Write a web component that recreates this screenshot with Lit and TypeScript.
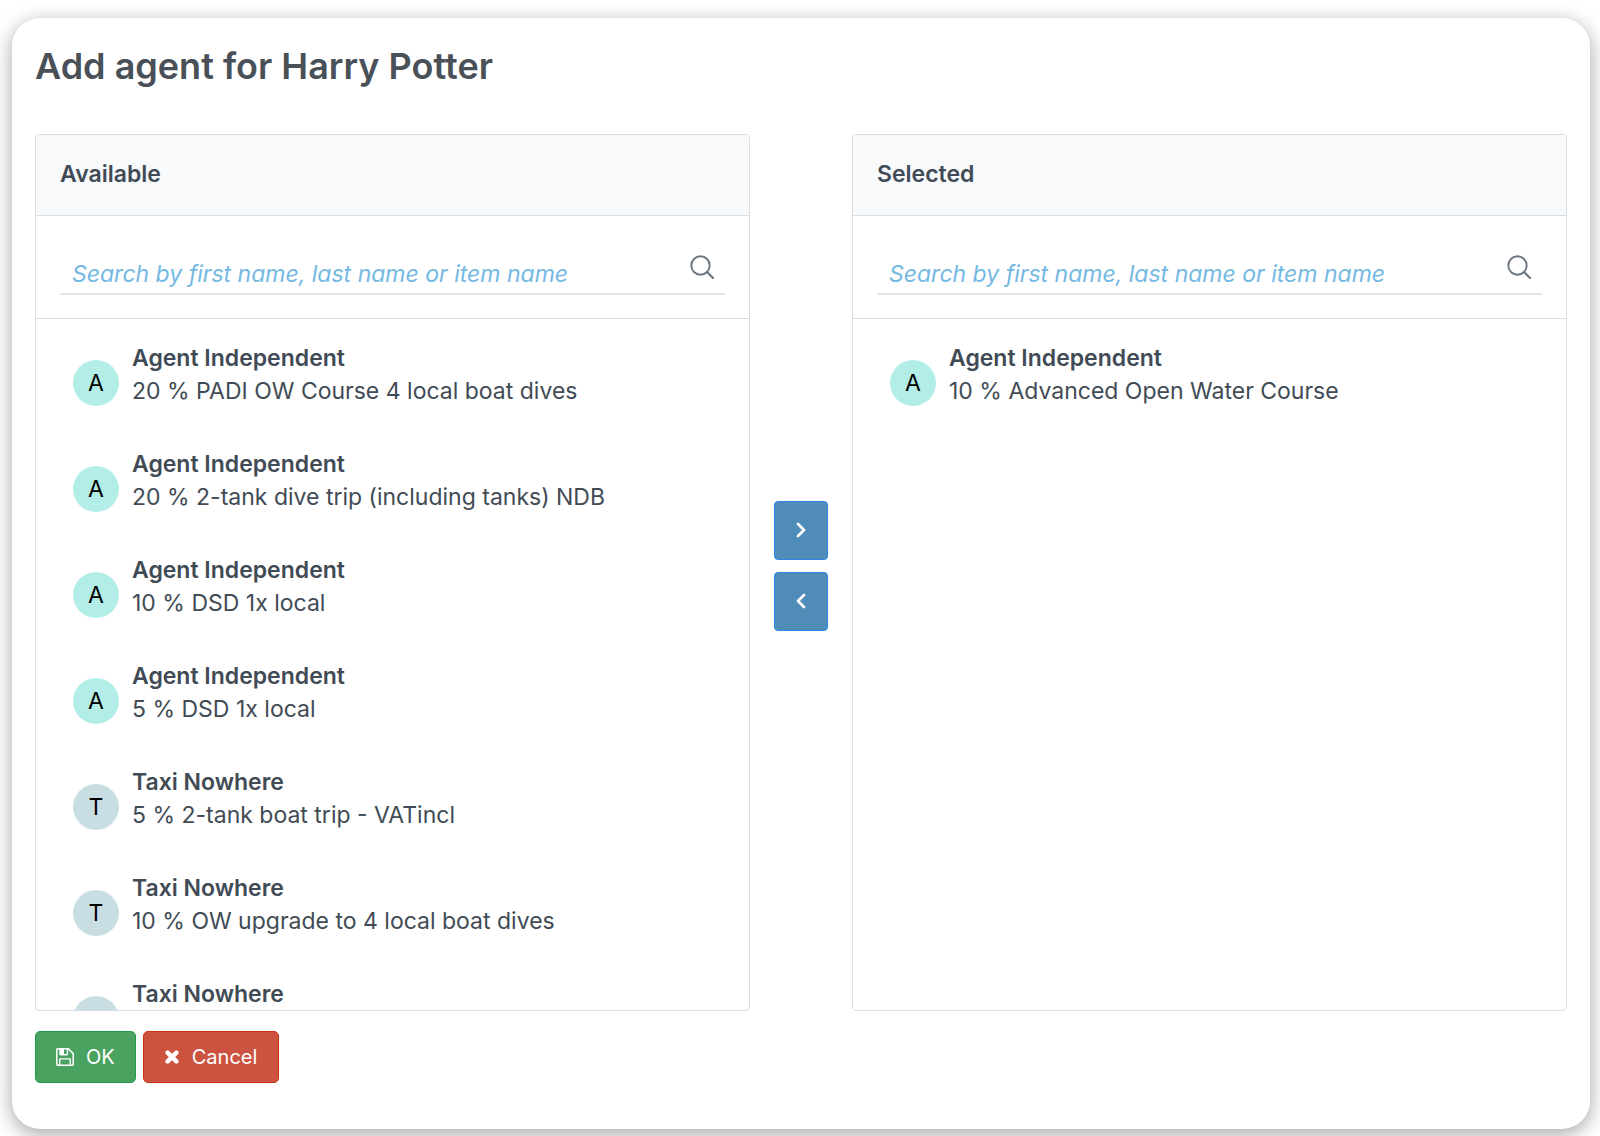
import { LitElement, html, css, svg } from "lit";
import { customElement, property, state } from "lit/decorators.js";

interface Commission {
  id: number;
  agent: string;
  detail: string;
}

const searchIcon = html`<svg class="icon" viewBox="0 0 24 24" width="24" height="24" aria-hidden="true">
  ${svg`<circle cx="10.5" cy="10.5" r="9.2" fill="none" stroke="currentColor" stroke-width="1.9"/>
  <path d="M17 17l6 6" fill="none" stroke="currentColor" stroke-width="2.1" stroke-linecap="round"/>`}
</svg>`;

const chevron = (d: string) => html`<svg viewBox="0 0 16 16" width="16" height="16" aria-hidden="true">
  <path d=${d} fill="none" stroke="currentColor" stroke-width="2.7" stroke-linecap="round" stroke-linejoin="round"/>
</svg>`;

const saveIcon = html`<svg viewBox="0 0 18 18" width="18" height="18" aria-hidden="true">
  <path d="M1.7 .8H12.4L17.2 5.6V16.3a.9 .9 0 0 1-.9 .9H1.7a.9 .9 0 0 1-.9-.9V1.7a.9 .9 0 0 1 .9-.9z" fill="none" stroke="currentColor" stroke-width="1.5"/>
  <path d="M4 1V6.1a.7 .7 0 0 0 .7 .7H10.8a.7 .7 0 0 0 .7-.7V1M3.7 17V11.6a.7 .7 0 0 1 .7-.7H13.6a.7 .7 0 0 1 .7 .7V17" fill="none" stroke="currentColor" stroke-width="1.4"/>
  <path d="M4 1h4v5H4z" fill="currentColor"/>
</svg>`;

const closeIcon = html`<svg viewBox="0 0 14 14" width="14" height="14" aria-hidden="true">
  <path d="M2.6 2.6l8.8 8.8M11.4 2.6l-8.8 8.8" fill="none" stroke="currentColor" stroke-width="4.4" stroke-linecap="round"/>
</svg>`;

@customElement("agent-panel")
export class AgentPanel extends LitElement {
  @property() heading = "";
  @property({ attribute: false }) items: Commission[] = [];
  @state() private query = "";

  static styles = css`
    :host {
      display: flex;
      flex-direction: column;
      box-sizing: border-box;
      min-width: 0;
      min-height: 0;
      border: 1px solid #d9dee3;
      border-radius: 4px;
      overflow: hidden;
      color: #414b55;
      background: #fff;
    }
    .title {
      margin: 0;
      padding: 23px 24px 25px;
      border-bottom: 1px solid #d9dee3;
      background: #f8f9fb;
      font-size: 23px;
      line-height: 32px;
      font-weight: 600;
    }
    .search {
      padding: 24px 24px 23px;
      border-bottom: 1px solid #d9dee3;
    }
    .field {
      display: flex;
      align-items: center;
      height: 53px;
      padding: 0 11px 0 12px;
      border-bottom: 2px solid #e4e7ea;
      color: #6c757d;
    }
    .input {
      flex: 1;
      min-width: 0;
      height: 52px;
      box-sizing: border-box;
      border: 0;
      padding: 14px 0 0;
      outline: 0;
      background: transparent;
      color: #414b55;
      font: inherit;
      font-size: 23px;
    }
    .input::placeholder {
      color: #74b9e3;
      font-style: italic;
      opacity: 1;
    }
    .list {
      flex: 1;
      min-height: 0;
      margin: 0;
      padding: 3px 0 0;
      list-style: none;
      overflow-y: auto;
      scrollbar-width: none;
    }
    .row {
      display: flex;
      align-items: flex-start;
      gap: 13px;
      padding: 20px 37px;
    }
    .avatar {
      display: grid;
      place-items: center;
      flex: none;
      width: 46px;
      height: 46px;
      margin-top: 18px;
      border-radius: 50%;
      background: #c9dee3;
      color: #000;
      font-size: 23px;
    }
    .avatar.a {
      background: #b2ede8;
    }
    .text {
      min-width: 0;
      min-height: 66px;
      font-size: 23px;
      line-height: 33px;
    }
    .name {
      font-weight: 600;
    }
  `;

  render() {
    const q = this.query.toLowerCase();
    const shown = this.items.filter((i) => `${i.agent} ${i.detail}`.toLowerCase().includes(q));
    return html`
      <h2 class="title">${this.heading}</h2>
      <div class="search">
        <div class="field">
          <input
            class="input"
            type="text"
            aria-label="Search by first name, last name or item name"
            placeholder="Search by first name, last name or item name"
            @input=${(e: Event) => (this.query = (e.target as HTMLInputElement).value)}
          />
          ${searchIcon}
        </div>
      </div>
      <ul class="list">
        ${shown.map(
          (i) => html`<li class="row">
            <span class="avatar ${i.agent[0].toLowerCase()}">${i.agent[0]}</span>
            <div class="text">
              <div class="name">${i.agent}</div>
              <div>${i.detail}</div>
            </div>
          </li>`
        )}
      </ul>
    `;
  }
}

@customElement("app-root")
export class AppRoot extends LitElement {
  @state() private available: Commission[] = [
    { id: 1, agent: "Agent Independent", detail: "20 % PADI OW Course 4 local boat dives" },
    { id: 2, agent: "Agent Independent", detail: "20 % 2-tank dive trip (including tanks) NDB" },
    { id: 3, agent: "Agent Independent", detail: "10 % DSD 1x local" },
    { id: 4, agent: "Agent Independent", detail: "5 % DSD 1x local" },
    { id: 5, agent: "Taxi Nowhere", detail: "5 % 2-tank boat trip - VATincl" },
    { id: 6, agent: "Taxi Nowhere", detail: "10 % OW upgrade to 4 local boat dives" },
    { id: 7, agent: "Taxi Nowhere", detail: "" },
  ];
  @state() private selected: Commission[] = [
    { id: 8, agent: "Agent Independent", detail: "10 % Advanced Open Water Course" },
  ];

  static styles = css`
    :host {
      display: flex;
      box-sizing: border-box;
      height: 100vh;
      min-height: 640px;
      padding: 18px 10px 7px 12px;
      background: #fff;
      font-family: Inter, "Liberation Sans", sans-serif;
    }
    .dialog {
      display: flex;
      flex-direction: column;
      flex: 1;
      min-width: 0;
      box-sizing: border-box;
      padding: 24px 23px 46px;
      border-radius: 28px;
      background: #fff;
      box-shadow: 0 5px 20px rgba(0, 0, 0, 0.36);
    }
    .heading {
      margin: 0 0 44px;
      color: #495057;
      font-size: 36px;
      line-height: 48px;
      font-weight: 600;
    }
    .picker {
      display: grid;
      grid-template-columns: minmax(0, 1fr) 54px minmax(0, 1fr);
      grid-template-rows: minmax(0, 1fr);
      column-gap: 24px;
      flex: 1;
      min-height: 0;
    }
    .moves {
      display: flex;
      flex-direction: column;
      justify-content: center;
      gap: 12px;
      padding-bottom: 14px;
    }
    .move {
      display: grid;
      place-items: center;
      height: 59px;
      margin: 0;
      padding: 0;
      border: 1px solid #2b8ae8;
      border-radius: 4px;
      background: #4f8cb8;
      color: #fff;
    }
    .actions {
      display: flex;
      gap: 7px;
      margin-top: 20px;
    }
    .button {
      display: flex;
      align-items: center;
      height: 52px;
      gap: 12px;
      padding: 0 20px;
      border: 1px solid;
      border-radius: 5px;
      color: #fff;
      font: inherit;
      font-size: 20px;
    }
    .ok {
      background: #4aa260;
      border-color: #229a4c;
    }
    .cancel {
      gap: 13px;
      padding: 0 21px;
      background: #cc5340;
      border-color: #cb3211;
    }
  `;

  private add() {
    const [first, ...rest] = this.available;
    if (!first) return;
    this.available = rest;
    this.selected = [...this.selected, first];
  }

  private remove() {
    const [first, ...rest] = this.selected;
    if (!first) return;
    this.selected = rest;
    this.available = [...this.available, first];
  }

  render() {
    return html`
      <main class="dialog">
        <h1 class="heading">Add agent for Harry Potter</h1>
        <div class="picker">
          <agent-panel heading="Available" .items=${this.available}></agent-panel>
          <div class="moves">
            <button class="move" type="button" aria-label="Add" @click=${this.add}>
              ${chevron("M5 2l6 6-6 6")}
            </button>
            <button class="move" type="button" aria-label="Remove" @click=${this.remove}>
              ${chevron("M11 2l-6 6 6 6")}
            </button>
          </div>
          <agent-panel heading="Selected" .items=${this.selected}></agent-panel>
        </div>
        <div class="actions">
          <button class="button ok" type="button">${saveIcon}<span>OK</span></button>
          <button class="button cancel" type="button">${closeIcon}<span>Cancel</span></button>
        </div>
      </main>
    `;
  }
}
